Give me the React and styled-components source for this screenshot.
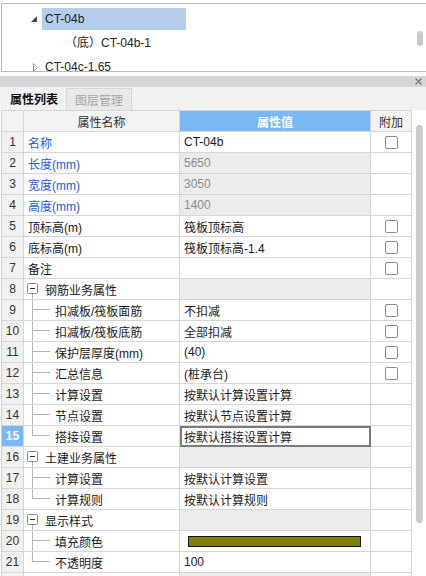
import React from 'react';
import styled, { createGlobalStyle, css } from 'styled-components';

const GlobalStyle = createGlobalStyle`
  html, body { margin: 0; padding: 0; background: #ffffff; }
  body { font-family: "Liberation Sans", "Noto Sans CJK SC", sans-serif; font-size: 12px; color: #222; }
  * { box-sizing: border-box; }
`;

const Page = styled.div`
  width: 426px;
  height: 576px;
  overflow: hidden;
  background: #ffffff;
  display: flex;
  flex-direction: column;
`;

/* ---------- tree panel ---------- */
const TreePanel = styled.div`
  margin: 3px 0 0 1px;
  height: 69px;
  border: 1px solid #b9b9b9;
  border-right: none;
  display: flex;
  overflow: hidden;
  flex: none;
`;

const TreeList = styled.div`
  flex: 1;
  padding-top: 4px;
  display: flex;
  flex-direction: column;
`;

const TreeRow = styled.div`
  height: 24px;
  display: flex;
  align-items: flex-start;
  padding-left: ${p => p.$indent}px;
  flex: none;
`;

const Toggle = styled.span`
  width: 12px;
  height: 22px;
  display: flex;
  align-items: center;
  justify-content: flex-start;
  padding-left: ${p => p.$pad || 0}px;
  flex: none;
`;

const TreeLabel = styled.span`
  height: 22px;
  line-height: 22px;
  padding-left: 3px;
  min-width: ${p => (p.$selected ? '144px' : '0')};
  background: ${p => (p.$selected ? '#b5cdec' : 'transparent')};
  color: #222;
  white-space: nowrap;
`;

const TreeScroll = styled.div`
  width: 9px;
  flex: none;
  padding-top: 27px;
`;

const Thumb = styled.div`
  width: 6px;
  height: ${p => p.$h}px;
  border-radius: 3px;
  background: #c9c9c9;
`;

/* ---------- property panel chrome ---------- */
const Gap = styled.div`
  height: 4px;
  flex: none;
`;

const TitleBar = styled.div`
  height: 11px;
  background: #d5d6db;
  display: flex;
  align-items: center;
  justify-content: flex-end;
  padding-right: 4px;
  flex: none;
`;

const TabStrip = styled.div`
  height: 23px;
  background: #f0f0f0;
  display: flex;
  align-items: stretch;
  padding-left: 2px;
  flex: none;
`;

const Tab = styled.div`
  width: ${p => p.$w}px;
  display: flex;
  align-items: center;
  justify-content: center;
  font-family: "Noto Sans CJK SC", sans-serif;
  font-size: 12px;
  ${p => (p.$active
    ? css`
        color: #111;
        font-weight: 700;
        background: #f0f0f0;
      `
    : css`
        color: #a6a6a6;
        background: #e8e8e8;
        border: 1px solid #d6d6d6;
        border-bottom: none;
        margin-top: 1px;
      `)}
`;

const Body = styled.div`
  flex: 1;
  display: flex;
  min-height: 0;
`;

/* ---------- property grid ---------- */
const Table = styled.div`
  margin-left: 1px;
  border-left: 1px solid #cfcfcf;
  width: 411px;
  flex: none;
  display: flex;
  flex-direction: column;
`;

const GridRow = styled.div`
  display: grid;
  grid-template-columns: 22px 156px 191px 41px;
  height: ${p => (p.$header ? 22 : 21)}px;
  flex: none;
  ${p => p.$header && css`border-top: 1px solid #d4d4d4;`}
`;

const Cell = styled.div`
  border-right: 1px solid #d6d6d6;
  border-bottom: 1px solid #d6d6d6;
  display: flex;
  align-items: center;
  white-space: nowrap;
  overflow: hidden;
  font-family: "Liberation Sans", "Noto Sans CJK SC", sans-serif;
  font-size: 12px;
`;

const NumCell = styled(Cell)`
  justify-content: center;
  background: ${p => (p.$selected ? '#7ab8f4' : '#f0f0f0')};
  color: ${p => (p.$selected ? '#ffffff' : '#333')};
  font-weight: ${p => (p.$selected ? 700 : 400)};
`;

const HeadCell = styled(Cell)`
  justify-content: center;
  background: ${p => (p.$blue ? '#7ab8f4' : '#f2f2f2')};
  color: ${p => (p.$blue ? '#ffffff' : '#333')};
  font-weight: ${p => (p.$blue ? 700 : 400)};
  font-family: "Noto Sans CJK SC", sans-serif;
`;

const NameCell = styled(Cell)`
  padding-left: ${p => (p.$plain ? 4 : 0)}px;
  color: ${p => (p.$blue ? '#1a5ce0' : '#1a1a1a')};
  background: #ffffff;
`;

const ValueCell = styled(Cell)`
  padding-left: 4px;
  background: ${p => (p.$gray ? '#ebebeb' : '#ffffff')};
  color: ${p => (p.$dim ? '#8e8e8e' : '#1a1a1a')};
  ${p => p.$editing && css`
    outline: 2px solid #7b7b7b;
    outline-offset: -2px;
  `}
`;

const AttachCell = styled(Cell)`
  justify-content: center;
  background: #ffffff;
`;

const CheckBox = styled.span`
  width: 13px;
  height: 13px;
  border: 1px solid #8d8d8d;
  border-radius: 2px;
  background: #ffffff;
  display: block;
`;

const Swatch = styled.span`
  display: block;
  margin-left: 4px;
  width: 173px;
  height: 11px;
  background: #808000;
  border: 1px solid #111;
`;

const VScroll = styled.div`
  flex: 1;
  padding: 15px 0 0 4px;
  background: #ffffff;
`;

const BigThumb = styled.div`
  width: 7px;
  height: 398px;
  border-radius: 4px;
  background: #cdcdcd;
`;

/* ---------- drawings ---------- */
const LINE = '#b5b5b5';

const GroupGlyph = () => (
  <svg width="21" height="20" viewBox="0 0 21 20" style={{ flex: 'none' }}>
    <line x1="8.5" y1="15" x2="8.5" y2="20" stroke={LINE} strokeWidth="1" />
    <rect x="3.5" y="4.5" width="10" height="10" fill="#fff" stroke="#8a8a8a" rx="1" />
    <line x1="6" y1="9.5" x2="11" y2="9.5" stroke="#333" strokeWidth="1" />
  </svg>
);

const ChildGlyph = ({ last }) => (
  <svg width="31" height="20" viewBox="0 0 31 20" style={{ flex: 'none' }}>
    <line x1="8.5" y1="0" x2="8.5" y2={last ? 10 : 20} stroke={LINE} strokeWidth="1" />
    <line x1="8.5" y1="9.5" x2="26" y2="9.5" stroke={LINE} strokeWidth="1" />
  </svg>
);

const Expanded = () => (
  <svg width="6" height="6" viewBox="0 0 6 6">
    <polygon points="0,6 6,6 6,0" fill="#454545" />
  </svg>
);

const Collapsed = () => (
  <svg width="6" height="9" viewBox="0 0 6 9">
    <polygon points="0.5,0.5 4.5,4.5 0.5,8.5" fill="#fff" stroke="#9a9a9a" />
  </svg>
);

const CloseX = () => (
  <svg width="7" height="7" viewBox="0 0 7 7">
    <path d="M0.5 0.5 L6.5 6.5 M6.5 0.5 L0.5 6.5" stroke="#777" strokeWidth="1.3" />
  </svg>
);

/* ---------- data ---------- */
const rows = [
  { n: 1, name: '名称', blue: true, value: 'CT-04b', check: true },
  { n: 2, name: '长度(mm)', blue: true, value: '5650', ro: true },
  { n: 3, name: '宽度(mm)', blue: true, value: '3050', ro: true },
  { n: 4, name: '高度(mm)', blue: true, value: '1400', ro: true },
  { n: 5, name: '顶标高(m)', value: '筏板顶标高', check: true },
  { n: 6, name: '底标高(m)', value: '筏板顶标高-1.4', check: true },
  { n: 7, name: '备注', value: '', check: true },
  { n: 8, name: '钢筋业务属性', group: true },
  { n: 9, name: '扣减板/筏板面筋', value: '不扣减', child: true, check: true },
  { n: 10, name: '扣减板/筏板底筋', value: '全部扣减', child: true, check: true },
  { n: 11, name: '保护层厚度(mm)', value: '(40)', child: true, check: true },
  { n: 12, name: '汇总信息', value: '(桩承台)', child: true, check: true },
  { n: 13, name: '计算设置', value: '按默认计算设置计算', child: true },
  { n: 14, name: '节点设置', value: '按默认节点设置计算', child: true },
  { n: 15, name: '搭接设置', value: '按默认搭接设置计算', child: true, last: true, selected: true },
  { n: 16, name: '土建业务属性', group: true },
  { n: 17, name: '计算设置', value: '按默认计算设置', child: true },
  { n: 18, name: '计算规则', value: '按默认计算规则', child: true, last: true },
  { n: 19, name: '显示样式', group: true },
  { n: 20, name: '填充颜色', swatch: true, child: true },
  { n: 21, name: '不透明度', value: '100', child: true, last: true },
  { n: 22, name: '', value: '', gray: true },
];

export default function App() {
  return (
    <>
      <GlobalStyle />
      <Page>
        <TreePanel>
          <TreeList>
            <TreeRow $indent={28}>
              <Toggle $pad={1}><Expanded /></Toggle>
              <TreeLabel $selected>CT-04b</TreeLabel>
            </TreeRow>
            <TreeRow $indent={60}>
              <TreeLabel>（底）CT-04b-1</TreeLabel>
            </TreeRow>
            <TreeRow $indent={28}>
              <Toggle $pad={3}><Collapsed /></Toggle>
              <TreeLabel>CT-04c-1.65</TreeLabel>
            </TreeRow>
          </TreeList>
          <TreeScroll>
            <Thumb $h={15} />
          </TreeScroll>
        </TreePanel>

        <Gap />
        <TitleBar>
          <CloseX />
        </TitleBar>
        <TabStrip>
          <Tab $w={64} $active>属性列表</Tab>
          <Tab $w={66}>图层管理</Tab>
        </TabStrip>

        <Body>
          <Table>
            <GridRow $header>
              <HeadCell />
              <HeadCell>属性名称</HeadCell>
              <HeadCell $blue>属性值</HeadCell>
              <HeadCell>附加</HeadCell>
            </GridRow>
            {rows.map(r => (
              <GridRow key={r.n}>
                <NumCell $selected={r.selected}>{r.n}</NumCell>
                <NameCell $blue={r.blue} $plain={!r.group && !r.child}>
                  {r.group && <GroupGlyph />}
                  {r.child && <ChildGlyph last={r.last} />}
                  {r.name}
                </NameCell>
                <ValueCell
                  $gray={r.ro || r.group || r.gray}
                  $dim={r.ro}
                  $editing={r.selected}
                >
                  {r.swatch ? <Swatch /> : r.value}
                </ValueCell>
                <AttachCell>{r.check && <CheckBox />}</AttachCell>
              </GridRow>
            ))}
          </Table>
          <VScroll>
            <BigThumb />
          </VScroll>
        </Body>
      </Page>
    </>
  );
}
